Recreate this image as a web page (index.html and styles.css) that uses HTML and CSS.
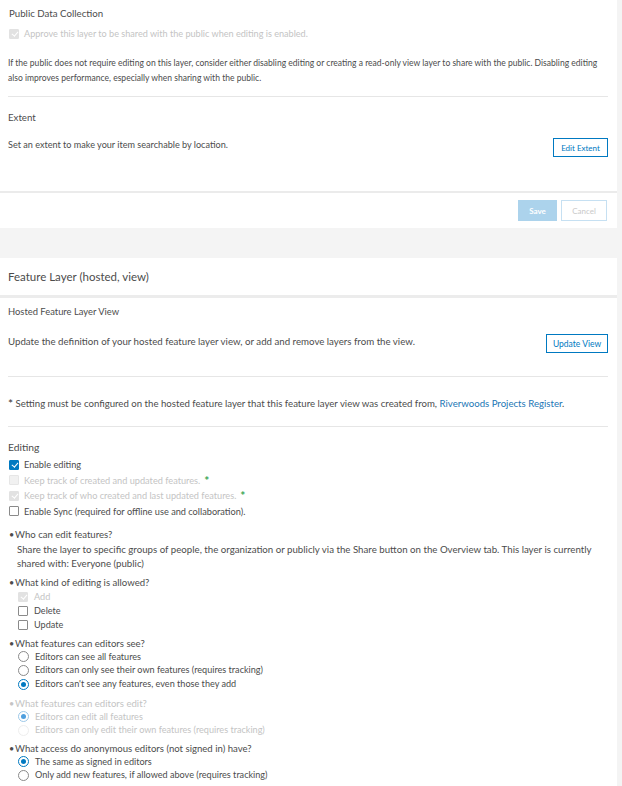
FILE: index.html
```html
<!DOCTYPE html>
<html>
<head>
<meta charset="utf-8">
<link rel="stylesheet" href="styles.css">
</head>
<body>
<div class="page">
  <section class="panel sec1">
    <div class="title">Public Data Collection</div>
    <div class="crow disabled approve"><span class="cb checked dis"></span><span>Approve this layer to be shared with the public when editing is enabled.</span></div>
    <p class="note">If the public does not require editing on this layer, consider either disabling editing or creating a read-only view layer to share with the public. Disabling editing also improves performance, especially when sharing with the public.</p>
    <hr class="divider d1">
    <div class="title extent">Extent</div>
    <div class="row extent-row">
      <span class="body-s">Set an extent to make your item searchable by location.</span>
      <button class="btn btn-extent">Edit Extent</button>
    </div>
  </section>
  <div class="footer">
    <button class="btn btn-save">Save</button>
    <button class="btn btn-cancel">Cancel</button>
  </div>

  <div class="panel header">Feature Layer (hosted, view)</div>
  <section class="panel sec2">
    <div class="title small">Hosted Feature Layer View</div>
    <div class="row update-row">
      <span class="body">Update the definition of your hosted feature layer view, or add and remove layers from the view.</span>
      <button class="btn btn-update">Update View</button>
    </div>
    <hr class="divider d2">
    <p class="body setting"><span class="ast-dark">*</span> Setting must be configured on the hosted feature layer that this feature layer view was created from, <a class="link">Riverwoods Projects Register</a>.</p>
    <hr class="divider d3">
    <div class="editing-title">Editing</div>
    <div class="checks">
      <div class="crow"><span class="cb checked"></span><span>Enable editing</span></div>
      <div class="crow disabled"><span class="cb dis"></span><span>Keep track of created and updated features.</span><span class="ast">*</span></div>
      <div class="crow disabled"><span class="cb checked dis"></span><span>Keep track of who created and last updated features.</span><span class="ast">*</span></div>
      <div class="crow"><span class="cb"></span><span>Enable Sync (required for offline use and collaboration).</span></div>
    </div>

    <div class="group first">
      <div class="q"><span class="dot">•</span>Who can edit features?</div>
      <div class="sub">Share the layer to specific groups of people, the organization or publicly via the Share button on the Overview tab. This layer is currently shared with: Everyone (public)</div>
    </div>
    <div class="group">
      <div class="q"><span class="dot">•</span>What kind of editing is allowed?</div>
      <div class="opts">
        <div class="crow disabled"><span class="cb checked dis"></span><span>Add</span></div>
        <div class="crow"><span class="cb"></span><span>Delete</span></div>
        <div class="crow"><span class="cb"></span><span>Update</span></div>
      </div>
    </div>
    <div class="group g5">
      <div class="q"><span class="dot">•</span>What features can editors see?</div>
      <div class="opts">
        <div class="crow short"><span class="rb"></span><span>Editors can see all features</span></div>
        <div class="crow"><span class="rb"></span><span>Editors can only see their own features (requires tracking)</span></div>
        <div class="crow"><span class="rb on"></span><span>Editors can't see any features, even those they add</span></div>
      </div>
    </div>
    <div class="group disabled">
      <div class="q"><span class="dot">•</span>What features can editors edit?</div>
      <div class="opts">
        <div class="crow short"><span class="rb on dis"></span><span>Editors can edit all features</span></div>
        <div class="crow"><span class="rb dis"></span><span>Editors can only edit their own features (requires tracking)</span></div>
      </div>
    </div>
    <div class="group g5">
      <div class="q"><span class="dot">•</span>What access do anonymous editors (not signed in) have?</div>
      <div class="opts">
        <div class="crow short"><span class="rb on"></span><span>The same as signed in editors</span></div>
        <div class="crow"><span class="rb"></span><span>Only add new features, if allowed above (requires tracking)</span></div>
      </div>
    </div>
  </section>
</div>
</body>
</html>
```

FILE: styles.css
```css
html, body {
  margin: 0;
  padding: 0;
  background: #f4f4f4;
}
body {
  font-family: "Lato", "Open Sans", sans-serif;
  color: #4c4c4c;
  width: 622px;
  height: 786px;
  overflow: hidden;
}
.page {
  width: 617px;
}
.panel {
  background: #fff;
}
.sec1 {
  padding: 6px 9px 34px 8px;
  border-bottom: 2px solid #ebebeb;
}
.title {
  font-size: 9.7px;
  line-height: 14px;
  padding-left: 1px;
}
.crow {
  display: flex;
  align-items: center;
  font-size: 9.2px;
  height: 14px;
  line-height: 14px;
  gap: 5px;
}
.approve {
  margin-top: 7px;
  padding-left: 1px;
  font-size: 9.1px;
}
.disabled, .disabled .q {
  color: #c4c4c4;
}
.note {
  margin: 15px -3px 0 0;
  font-size: 8.55px;
  line-height: 15px;
}
.divider {
  border: 0;
  border-top: 1px solid #e6e6e6;
  margin: 0;
}
.d1 { margin-top: 10px; }
.extent { margin-top: 13px; padding-left: 0; }
.row {
  display: flex;
  justify-content: space-between;
  align-items: flex-start;
}
.extent-row { margin-top: 14px; }
.body-s {
  font-size: 9.1px;
  line-height: 14px;
}
.body {
  font-size: 9.7px;
  line-height: 14px;
}
.btn {
  font-family: inherit;
  background: #fff;
  border: 1px solid #0079c1;
  color: #0079c1;
  font-size: 8px;
  height: 19px;
  padding: 0;
  box-sizing: border-box;
  border-radius: 0;
}
.btn-extent { width: 55px; }
.footer {
  background: #fff;
  height: 35px;
  box-sizing: border-box;
  padding: 7px 10px 0 0;
  display: flex;
  justify-content: flex-end;
  gap: 4px;
  margin-bottom: 30px;
}
.btn-save {
  width: 39px;
  height: 21px;
  background: #acd3ec;
  border-color: #acd3ec;
  color: #fff;
  font-weight: bold;
}
.btn-cancel {
  width: 46px;
  height: 21px;
  border-color: #c6e0f2;
  color: #c9c9c9;
}
.header {
  height: 37px;
  font-size: 11.5px;
  line-height: 37px;
  padding-left: 8px;
  border-bottom: 3px solid #ececec;
}
.sec2 {
  padding: 7px 9px 20px 8px;
}
.small { font-size: 9.4px; padding-left: 0; }
.update-row { margin-top: 15px; }
.btn-update { width: 62px; font-size: 8.5px; }
.d2 { margin-top: 23px; }
.setting {
  margin: 19px 0 0;
  font-size: 9.65px;
  height: 14px;
}
.ast-dark {
  font-size: 12px;
  line-height: 10px;
  color: #333;
  vertical-align: -1px;
}
.link { color: #2276b5; }
.d3 { margin-top: 16px; }
.editing-title {
  margin-top: 13px;
  font-size: 10.3px;
  line-height: 14px;
}
.checks {
  margin-top: 3px;
  padding-left: 1px;
}
.checks .crow { height: 15.5px; line-height: 15.5px; }
.ast {
  color: #3aa655;
  font-size: 12px;
  font-weight: bold;
  margin-left: -1px;
}
.cb {
  width: 8px;
  height: 8px;
  border: 1px solid #8a8a8a;
  border-radius: 1px;
  background: #fff;
  position: relative;
  flex: none;
}
.cb.checked {
  background: #0079c1;
  border-color: #0079c1;
}
.cb.checked::after {
  content: "";
  position: absolute;
  left: 2.5px;
  top: 0px;
  width: 2.5px;
  height: 5px;
  border: solid #fff;
  border-width: 0 1.5px 1.5px 0;
  transform: rotate(40deg);
}
.cb.dis {
  background: #f1f1f1;
  border-color: #e6e6e6;
}
.cb.checked.dis {
  background: #e2e2e2;
  border-color: #e2e2e2;
}
.rb {
  width: 9px;
  height: 9px;
  border: 1px solid #8a8a8a;
  border-radius: 50%;
  background: #fff;
  position: relative;
  flex: none;
}
.rb.on {
  border-color: #0079c1;
}
.rb.on::after {
  content: "";
  position: absolute;
  left: 2px;
  top: 2px;
  width: 5px;
  height: 5px;
  border-radius: 50%;
  background: #0079c1;
}
.rb.dis { border-color: #eeeeee; }
.rb.on.dis { border-color: #9cc8e8; }
.rb.on.dis::after { background: #4f9fde; }
.group {
  margin-top: 6px;
  font-size: 9.6px;
  line-height: 14px;
}
.group.first { margin-top: 9px; }
.group.g5 { margin-top: 5px; }
.q { display: flex; }
.dot { width: 6px; padding-left: 1px; font-size: 9px; }
.sub { padding-left: 9px; font-size: 9.7px; }
.opts { padding-left: 10px; }
.opts .crow { gap: 6px; font-size: 9.1px; }
.opts .crow.short { height: 13px; margin-top: -1px; }
```
